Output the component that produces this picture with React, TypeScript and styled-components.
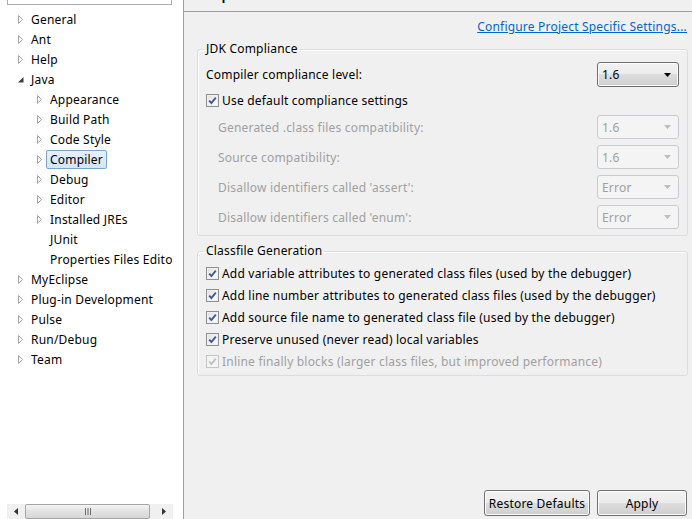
import React from "react";
import styled, { createGlobalStyle } from "styled-components";

const GlobalStyle = createGlobalStyle`
  html, body {
    margin: 0;
    padding: 0;
  }
  body {
    font-family: "Noto Sans", "Open Sans", sans-serif;
    font-size: 12px;
    letter-spacing: 0.2px;
    color: #000;
    background: #f0f0f0;
    overflow: hidden;
  }
`;

const Window = styled.div`
  display: flex;
  width: 692px;
  height: 519px;
  overflow: hidden;
`;

/* ---------- left tree ---------- */

const Sidebar = styled.div`
  box-sizing: border-box;
  width: 184px;
  flex: none;
  display: flex;
  flex-direction: column;
  background: #fff;
  border-right: 1px solid #a0a0a0;
`;

const FilterBox = styled.div`
  box-sizing: border-box;
  height: 5px;
  margin: 0 11px 0 7px;
  border: 1px solid #abadb3;
  border-top: none;
`;

const Tree = styled.div`
  margin-top: 4px;
  width: 172px;
  overflow: hidden;
`;

const TreeRow = styled.div<{ $level: number }>`
  display: flex;
  align-items: center;
  height: 20px;
  padding-left: ${(p) => 16 + p.$level * 19}px;
  white-space: nowrap;
`;

const Toggle = styled.span`
  display: flex;
  width: 9px;
  height: 9px;
  margin-right: 2px;
  flex: none;
`;

const TreeLabel = styled.span<{ $selected?: boolean }>`
  box-sizing: border-box;
  height: 19px;
  line-height: 17px;
  padding: 0 3px;
  border: 1px solid ${(p) => (p.$selected ? "#7da2ce" : "transparent")};
  border-radius: 2px;
  background: ${(p) =>
    p.$selected ? "linear-gradient(#e6f0fb, #d3e5fa)" : "transparent"};
`;

const SidebarFill = styled.div`
  flex: 1;
`;

const HScroll = styled.div`
  display: flex;
  align-items: stretch;
  height: 15px;
  margin: 0 10px 0 7px;
  background: #f0f0f0;
`;

const ScrollArrow = styled.span`
  display: flex;
  align-items: center;
  justify-content: center;
  width: 18px;
  flex: none;
`;

const ScrollThumb = styled.span`
  box-sizing: border-box;
  flex: 1;
  display: flex;
  align-items: center;
  justify-content: center;
  border: 1px solid #a5a5a5;
  border-radius: 2px;
  margin: 0 5px 0 0;
  background: linear-gradient(#f4f4f4, #e2e2e2 50%, #d6d6d6);
`;

/* ---------- right page ---------- */

const Main = styled.div`
  flex: 1;
  min-width: 0;
  display: flex;
  flex-direction: column;
  background: #f0f0f0;
`;

const Header = styled.div`
  box-sizing: border-box;
  height: 12px;
  padding-left: 6px;
  overflow: hidden;
  border-bottom: 1px solid #a0a0a0;
`;

const PageTitle = styled.div`
  margin-top: -12px;
  font-size: 14px;
  line-height: 14px;
  font-weight: 600;
`;

const LinkRow = styled.div`
  display: flex;
  justify-content: flex-end;
  padding: 7px 5px 0 0;
  line-height: 16px;
`;

const Link = styled.a`
  color: #0066cc;
  text-decoration: underline;
  cursor: pointer;
`;

const Group = styled.fieldset<{ $top: number }>`
  margin: ${(p) => p.$top}px 4px 0 13px;
  padding: 0 8px 3px 8px;
  border: 1px solid #d5dfe5;
  border-radius: 3px;
  min-width: 0;
  box-shadow: inset 1px 1px 0 #fff;
`;

const Legend = styled.legend`
  margin-left: -2px;
  padding: 0 2px;
  line-height: 16px;
`;

const GroupBody = styled.div<{ $padTop: number }>`
  display: flex;
  flex-direction: column;
  padding-top: ${(p) => p.$padTop}px;
`;

const FieldRow = styled.div<{ $height: number; $indent?: number }>`
  display: flex;
  align-items: center;
  justify-content: space-between;
  height: ${(p) => p.$height}px;
  padding-left: ${(p) => p.$indent ?? 0}px;
`;

const Label = styled.span<{ $disabled?: boolean }>`
  color: ${(p) => (p.$disabled ? "#a0a0a0" : "#000")};
  white-space: nowrap;
`;

const CheckRow = styled.label<{ $height: number }>`
  display: flex;
  align-items: center;
  gap: 3px;
  height: ${(p) => p.$height}px;
`;

const CheckBox = styled.span<{ $disabled?: boolean }>`
  box-sizing: border-box;
  width: 13px;
  height: 13px;
  flex: none;
  display: flex;
  align-items: center;
  justify-content: center;
  border: 1px solid ${(p) => (p.$disabled ? "#c5c5c5" : "#8e8f8f")};
  background: ${(p) =>
    p.$disabled
      ? "#f4f4f4"
      : "linear-gradient(135deg, #dcdcdc, #f5f5f5 60%, #fff)"};
  box-shadow: inset 0 0 0 1px ${(p) => (p.$disabled ? "#f4f4f4" : "#f0f0f0")};
`;

const Combo = styled.div<{ $disabled?: boolean; $height: number }>`
  box-sizing: border-box;
  width: 82px;
  height: ${(p) => p.$height}px;
  flex: none;
  display: flex;
  align-items: center;
  justify-content: space-between;
  padding: 0 7px 0 4px;
  border-radius: 3px;
  border: 1px solid ${(p) => (p.$disabled ? "#c9cccf" : "#707070")};
  color: ${(p) => (p.$disabled ? "#a0a0a0" : "#000")};
  background: ${(p) =>
    p.$disabled
      ? "#f4f4f4"
      : "linear-gradient(#f2f2f2 0%, #ebebeb 50%, #dddddd 50%, #cfcfcf 100%)"};
  box-shadow: ${(p) => (p.$disabled ? "none" : "inset 0 0 0 1px #fbfbfb")};
`;

const PageFill = styled.div`
  flex: 1;
`;

const ButtonBar = styled.div`
  display: flex;
  justify-content: flex-end;
  gap: 7px;
  padding: 0 5px 3px 0;
`;

const Button = styled.button<{ $width: number }>`
  box-sizing: border-box;
  width: ${(p) => p.$width}px;
  height: 26px;
  padding: 0;
  font-family: inherit;
  font-size: 12px;
  letter-spacing: 0.2px;
  color: #000;
  border: 1px solid #707070;
  border-radius: 3px;
  background: linear-gradient(#f2f2f2 0%, #ebebeb 50%, #dddddd 50%, #cfcfcf 100%);
  box-shadow: inset 0 0 0 1px #fcfcfc;
`;

/* ---------- drawings ---------- */

const Collapsed = () => (
  <svg width="9" height="9" viewBox="0 0 9 9">
    <path d="M2.5 0.5 L6.5 4.5 L2.5 8.5 Z" fill="#fff" stroke="#a6a6a6" />
  </svg>
);

const Expanded = () => (
  <svg width="9" height="9" viewBox="0 0 9 9">
    <path d="M7.5 2 L7.5 7.5 L2 7.5 Z" fill="#3c3c3c" />
  </svg>
);

const Check = ({ disabled }: { disabled?: boolean }) => (
  <svg width="9" height="9" viewBox="0 0 9 9">
    <path
      d="M1.2 4.6 L3.4 7 L7.8 1.6"
      fill="none"
      stroke={disabled ? "#c2c2c2" : "#3d5b9c"}
      strokeWidth="1.9"
    />
  </svg>
);

const DropArrow = ({ disabled }: { disabled?: boolean }) => (
  <svg width="7" height="4" viewBox="0 0 7 4">
    <path d="M0 0 L7 0 L3.5 4 Z" fill={disabled ? "#bdbdbd" : "#000"} />
  </svg>
);

const Arrow = ({ dir }: { dir: "left" | "right" }) => (
  <svg width="4" height="7" viewBox="0 0 4 7">
    <path d={dir === "left" ? "M4 0 L0 3.5 L4 7 Z" : "M0 0 L4 3.5 L0 7 Z"} fill="#333" />
  </svg>
);

const Grip = () => (
  <svg width="8" height="7" viewBox="0 0 8 7">
    <path d="M1.5 0 V7 M4 0 V7 M6.5 0 V7" stroke="#6f6f6f" strokeWidth="1" />
  </svg>
);

/* ---------- data ---------- */

type Node = { label: string; level: number; toggle?: "open" | "closed"; selected?: boolean };

const tree: Node[] = [
  { label: "General", level: 0, toggle: "closed" },
  { label: "Ant", level: 0, toggle: "closed" },
  { label: "Help", level: 0, toggle: "closed" },
  { label: "Java", level: 0, toggle: "open" },
  { label: "Appearance", level: 1, toggle: "closed" },
  { label: "Build Path", level: 1, toggle: "closed" },
  { label: "Code Style", level: 1, toggle: "closed" },
  { label: "Compiler", level: 1, toggle: "closed", selected: true },
  { label: "Debug", level: 1, toggle: "closed" },
  { label: "Editor", level: 1, toggle: "closed" },
  { label: "Installed JREs", level: 1, toggle: "closed" },
  { label: "JUnit", level: 1 },
  { label: "Properties Files Editor", level: 1 },
  { label: "MyEclipse", level: 0, toggle: "closed" },
  { label: "Plug-in Development", level: 0, toggle: "closed" },
  { label: "Pulse", level: 0, toggle: "closed" },
  { label: "Run/Debug", level: 0, toggle: "closed" },
  { label: "Team", level: 0, toggle: "closed" },
];

const compliance = [
  { label: "Generated .class files compatibility:", value: "1.6" },
  { label: "Source compatibility:", value: "1.6" },
  { label: "Disallow identifiers called 'assert':", value: "Error" },
  { label: "Disallow identifiers called 'enum':", value: "Error" },
];

const classfile = [
  { label: "Add variable attributes to generated class files (used by the debugger)" },
  { label: "Add line number attributes to generated class files (used by the debugger)" },
  { label: "Add source file name to generated class file (used by the debugger)" },
  { label: "Preserve unused (never read) local variables" },
  { label: "Inline finally blocks (larger class files, but improved performance)", disabled: true },
];

const App = () => {
  return (
    <>
      <GlobalStyle />
      <Window>
        <Sidebar>
          <FilterBox />
          <Tree>
            {tree.map((node) => (
              <TreeRow key={node.label} $level={node.level}>
                <Toggle>
                  {node.toggle === "closed" && <Collapsed />}
                  {node.toggle === "open" && <Expanded />}
                </Toggle>
                <TreeLabel $selected={node.selected}>{node.label}</TreeLabel>
              </TreeRow>
            ))}
          </Tree>
          <SidebarFill />
          <HScroll>
            <ScrollArrow>
              <Arrow dir="left" />
            </ScrollArrow>
            <ScrollThumb>
              <Grip />
            </ScrollThumb>
            <ScrollArrow>
              <Arrow dir="right" />
            </ScrollArrow>
          </HScroll>
        </Sidebar>

        <Main>
          <Header>
            <PageTitle>Compiler</PageTitle>
          </Header>
          <LinkRow>
            <Link>Configure Project Specific Settings...</Link>
          </LinkRow>

          <Group $top={6}>
            <Legend>JDK Compliance</Legend>
            <GroupBody $padTop={4}>
              <FieldRow $height={27}>
                <Label>Compiler compliance level:</Label>
                <Combo $height={25}>
                  <span>1.6</span>
                  <DropArrow />
                </Combo>
              </FieldRow>
              <CheckRow $height={24}>
                <CheckBox>
                  <Check />
                </CheckBox>
                <Label>Use default compliance settings</Label>
              </CheckRow>
              {compliance.map((row) => (
                <FieldRow key={row.label} $height={30} $indent={12}>
                  <Label $disabled>{row.label}</Label>
                  <Combo $disabled $height={24}>
                    <span>{row.value}</span>
                    <DropArrow disabled />
                  </Combo>
                </FieldRow>
              ))}
            </GroupBody>
          </Group>

          <Group $top={7}>
            <Legend>Classfile Generation</Legend>
            <GroupBody $padTop={3}>
              {classfile.map((row) => (
                <CheckRow key={row.label} $height={22}>
                  <CheckBox $disabled={row.disabled}>
                    <Check disabled={row.disabled} />
                  </CheckBox>
                  <Label $disabled={row.disabled}>{row.label}</Label>
                </CheckRow>
              ))}
            </GroupBody>
          </Group>

          <PageFill />
          <ButtonBar>
            <Button $width={106}>Restore Defaults</Button>
            <Button $width={90}>Apply</Button>
          </ButtonBar>
        </Main>
      </Window>
    </>
  );
};

export default App;
